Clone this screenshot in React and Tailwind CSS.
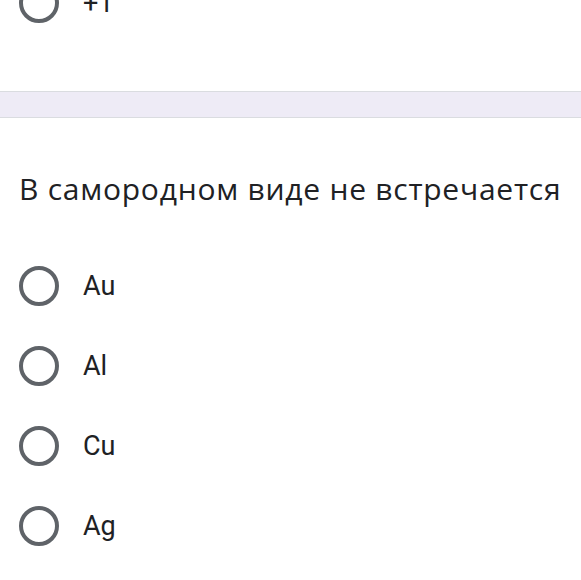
const OPTIONS = ['Au', 'Al', 'Cu', 'Ag'];

const Radio = () => (
	<span className="block w-10 h-10 shrink-0 rounded-full border-4 border-[#5f6368]" />
);

const OptionRow = ({ label }) => (
	<div className="flex items-center h-20 pl-[19px]">
		<Radio />
		<span className="ml-6 text-[27px] leading-none text-[#202124]">{label}</span>
	</div>
);

export default function App() {
	return (
		<div
			className="w-[581px] h-[580px] overflow-hidden bg-white"
			style={{ fontFamily: 'Roboto, "Noto Sans", sans-serif' }}
		>
			<div className="h-[91px] overflow-hidden">
				<div className="-mt-[37px]">
					<OptionRow label="+1" />
				</div>
			</div>
			<div className="h-[27px] bg-[#eeebf6] border-y-[1.5px] border-[#dadce0]" />
			<div className="pt-[53px]">
				<h2
					className="px-[19px] text-[30px] leading-[35px] tracking-[0.75px] text-[#202124] whitespace-nowrap"
					style={{ fontFamily: '"Open Sans", Roboto, sans-serif' }}
				>
					В самородном виде не встречается
				</h2>
				<div className="mt-10">
					{OPTIONS.map((o) => (
						<OptionRow key={o} label={o} />
					))}
				</div>
			</div>
		</div>
	);
}
